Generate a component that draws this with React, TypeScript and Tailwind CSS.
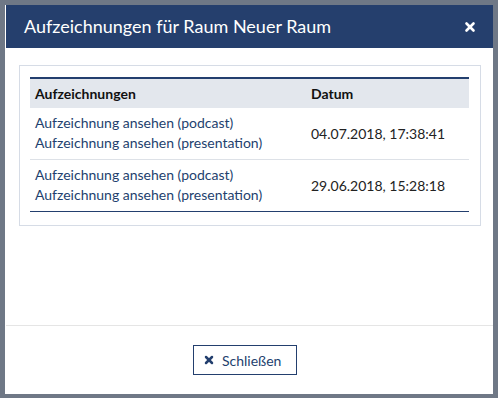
import { X } from "lucide-react";

const rows = [
  { date: "04.07.2018, 17:38:41" },
  { date: "29.06.2018, 15:28:18" },
];

function RecordingRow({ date, last }: { date: string; last?: boolean }) {
  return (
    <tr className={last ? "" : "border-b border-[#dde1e7]"}>
      <td className="px-[5px] pt-[5px] pb-[6px] align-middle leading-[20px]">
        <a href="#" className="block text-[#233f6e]">
          Aufzeichnung ansehen (podcast)
        </a>
        <a href="#" className="block text-[#233f6e]">
          Aufzeichnung ansehen (presentation)
        </a>
      </td>
      <td className="px-[5px] align-middle text-[#222]">{date}</td>
    </tr>
  );
}

export default function App() {
  return (
    <div
      className="w-[498px] h-[398px] bg-[#6f7886] pt-[5px] pl-[5px]"
      style={{ fontFamily: "Lato, 'Open Sans', sans-serif" }}
    >
      <div className="w-[488px] h-[389px] bg-white border-l border-white flex flex-col">
        <header className="h-[43px] bg-[#253f6d] flex items-center justify-between pl-[18px] pr-[16px]">
          <h1 className="text-white text-[18px]">Aufzeichnungen für Raum Neuer Raum</h1>
          <X className="w-[14px] h-[14px] text-white" strokeWidth={4.5} />
        </header>

        <div className="flex-1 pl-[13px] pr-[12px] pt-[17px]">
          <div className="border border-[#d6dce6] pt-[11px] pb-[13px] pl-[10px] pr-[11px]">
            <table className="w-full text-[14px] border-collapse">
              <thead>
                <tr className="bg-[#e3e7ed] border-t-2 border-[#233f6e]">
                  <th className="text-left font-bold h-[30px] px-[5px] text-[#111] w-[276px]">
                    Aufzeichnungen
                  </th>
                  <th className="text-left font-bold px-[5px] text-[#111]">Datum</th>
                </tr>
              </thead>
              <tbody className="border-b border-[#233f6e]">
                {rows.map((r, i) => (
                  <RecordingRow key={r.date} date={r.date} last={i === rows.length - 1} />
                ))}
              </tbody>
            </table>
          </div>
        </div>

        <footer className="h-[69px] border-t border-[#e5e5e5] flex items-center justify-center">
          <button className="flex items-center gap-[7px] w-[104px] h-[30px] pl-[9px] border border-[#233f6e] text-[#233f6e] text-[14px] ml-[-9px]">
            <X className="w-[12px] h-[12px]" strokeWidth={5} />
            Schließen
          </button>
        </footer>
      </div>
    </div>
  );
}
